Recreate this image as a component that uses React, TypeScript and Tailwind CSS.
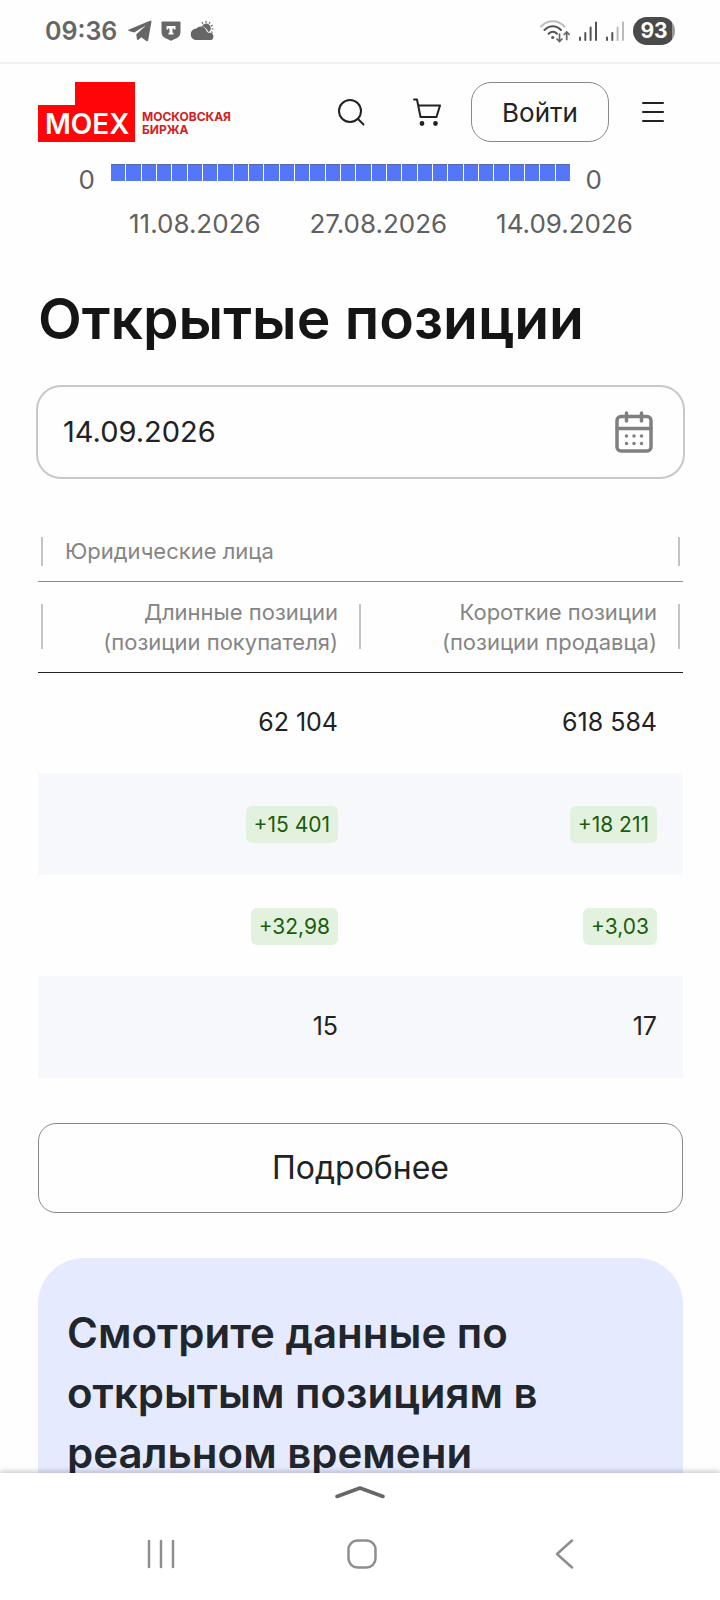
import { useState } from 'react';
import clsx from 'clsx';

interface PositionRow {
  label: string;
  long: string;
  short: string;
  badge?: boolean;
}

const ROWS: PositionRow[] = [
  { label: 'positions', long: '62 104', short: '618 584' },
  { label: 'change', long: '+15 401', short: '+18 211', badge: true },
  { label: 'percent', long: '+32,98', short: '+3,03', badge: true },
  { label: 'holders', long: '15', short: '17' },
];

const AXIS_DATES = ['11.08.2026', '27.08.2026', '14.09.2026'];
const BAR_COUNT = 30;

function StatusBar() {
  return (
    <div className="flex h-16 shrink-0 items-center justify-between border-b-2 border-[#f1f1f1] pr-[45px] pl-[45px] text-[#666]">
      <div className="flex items-center gap-[9px]">
        <span className="text-[25px] leading-8 font-semibold">09:36</span>
        <svg className="ml-[2px] h-[22px] w-6" viewBox="0 0 24 22" fill="currentColor" aria-hidden="true">
          <path d="M1 9.500 22 .8c1-.3 1.600.1 1.400 1.200L20.200 20c-.2 1.200-1 1.500-1.900 1l-5-3.700-2.900 2.500c-.6.500-1.300.2-1.400-.5L8.200 14.600 18 5.200 6.200 12.500 1 11c-1-.3-1-1.100 0-1.500z" />
        </svg>
        <svg className="h-5 w-5" viewBox="0 0 20 20" aria-hidden="true">
          <path d="M.5 1.500Q.5.500 1.500.5h17q1 0 1 1v9.500c0 3-1.500 4.800-3.500 6L10 19.800 4 17C2 15.800.5 14 .5 11z" fill="currentColor" />
          <path d="M5.500 5h9v3.600h-1.600V7.600h-1.400v4.200h1v1.600H7.500v-1.600h1V7.600H7.100v1H5.500z" fill="#fff" />
        </svg>
        <svg className="h-5 w-6" viewBox="0 0 24 20" fill="currentColor" aria-hidden="true">
          <path d="M6.500 19A5.700 5.700 0 0 1 6.300 7.600 6 6 0 0 1 16.500 10l1.500 1.800h1.800a3.600 3.600 0 0 1 0 7.200z" />
          <path d="M11.800 5.400a4.700 4.700 0 1 1 7.500 5.300h-1.200A8 8 0 0 0 11.800 5.400z" />
          <path d="M16 0v2M12 1l.8 1.800M20 1l-.8 1.800M22.700 4.200l-1.800.9M23.500 8h-2M22.700 11.500l-1.600-.8" stroke="currentColor" strokeWidth="1.200" />
        </svg>
      </div>

      <div className="flex items-center gap-[9px]">
        <svg className="h-6 w-[30px]" viewBox="0 0 30 24" fill="none" strokeWidth="2" strokeLinecap="round" aria-hidden="true">
          <path d="M1 7.500c6.500-7 17-7 23.500 0" stroke="#bbb" />
          <path d="M4.500 11c5-5 11.500-5 16.500 0M8.500 14.800c2.800-2.500 6-2.500 8.500 0" stroke="#555" />
          <circle cx="12.700" cy="18.500" r="1.600" fill="#555" />
          <path d="M19.500 15v7.500m-2.500-2.500 2.500 2.500 2.500-2.500M26.700 20.500V13m-2.500 2.500 2.500-2.500 2.500 2.500" stroke="#666" strokeWidth="1.700" />
        </svg>
        <svg className="h-5 w-[18px]" viewBox="0 0 18 20" stroke="#555" strokeWidth="2" strokeLinecap="round" aria-hidden="true">
          <path d="M1 16.500V19M6.300 12v7M11.600 6.500V19M17 1.500V19" />
        </svg>
        <svg className="h-5 w-[18px]" viewBox="0 0 18 20" strokeWidth="2" strokeLinecap="round" aria-hidden="true">
          <path d="M1 16.500V19M6.300 12v7" stroke="#555" />
          <path d="M11.600 6.500V19M17 1.500V19" stroke="#bbb" />
        </svg>
        <span className="h-7 w-[42px] overflow-hidden rounded-full bg-linear-to-r from-[#4a4a4a] from-93% to-[#999] to-93% text-center text-[21px] leading-7 font-bold text-white">
          93
        </span>
      </div>
    </div>
  );
}

function Logo() {
  return (
    <svg className="h-[60px] w-[200px]" viewBox="0 0 200 60" fontFamily="Inter, 'Liberation Sans', sans-serif">
      <path d="M37 0h60v60H0V23h37z" fill="#ff0508" />
      <text x="7" y="52" fontSize="28" fontWeight="600" fill="#fff">MOEX</text>
      <text x="104" y="39" fontSize="12" fontWeight="700" fill="#d32020">МОСКОВСКАЯ</text>
      <text x="104" y="52" fontSize="12" fontWeight="700" fill="#d32020">БИРЖА</text>
    </svg>
  );
}

function Header() {
  return (
    <header className="flex h-[100px] shrink-0 items-center justify-between pt-[18px] pr-[55px] pb-[22px] pl-[38px] text-[#222]">
      <a href="#" aria-label="Московская биржа">
        <Logo />
      </a>
      <div className="flex items-center">
        <button type="button" aria-label="Поиск" className="mr-12">
          <svg className="h-7 w-7" viewBox="0 0 28 28" fill="none" stroke="currentColor" strokeWidth="2" strokeLinecap="round">
            <circle cx="13" cy="13" r="11" />
            <path d="m21 21 5.500 5.500" />
          </svg>
        </button>
        <button type="button" aria-label="Корзина" className="mr-[30px]">
          <svg className="h-7 w-7" viewBox="0 0 28 28" fill="none" stroke="currentColor" strokeWidth="2" strokeLinejoin="round" strokeLinecap="round">
            <path d="M1 1.500h3L7.500 19H23.500L27 7.500H5.200" />
            <circle cx="9" cy="25.500" r="1.400" fill="currentColor" />
            <circle cx="22.500" cy="25.500" r="1.400" fill="currentColor" />
          </svg>
        </button>
        <button type="button" className="mr-8 h-[60px] w-[138px] rounded-[20px] border border-[#888] text-[26px]">
          Войти
        </button>
        <button type="button" aria-label="Меню">
          <svg className="h-6 w-6" viewBox="0 0 24 24" stroke="currentColor" strokeWidth="2" strokeLinecap="round">
            <path d="M2 3h20M2 12h20M2 21h20" />
          </svg>
        </button>
      </div>
    </header>
  );
}

function VolumeChart() {
  return (
    <section className="pr-[87px] pl-[43px] text-[26px] leading-8 text-[#606060]">
      <div className="flex pr-[31px]">
        <span className="w-[68px] pr-4 text-right">0</span>
        <div className="flex h-[17px] flex-1 gap-px">
          {Array.from({ length: BAR_COUNT }, (_, i) => (
            <div key={i} className="flex-1 border-t border-[#5468b0] bg-[#5676f8]" />
          ))}
        </div>
        <span className="w-8 text-right">0</span>
      </div>
      <div className="mt-3 flex justify-between pl-[86px]">
        {AXIS_DATES.map(date => (
          <span key={date}>{date}</span>
        ))}
      </div>
    </section>
  );
}

function DateField() {
  const [date, setDate] = useState('14.09.2026');

  return (
    <div className="-mx-[2px] mt-7 flex h-[94px] items-center rounded-[25px] border-2 border-[#c8c8c8] pr-[30px] pl-[25px]">
      <input
        type="text"
        aria-label="Дата"
        value={date}
        onChange={e => setDate(e.target.value)}
        className="min-w-0 flex-1 text-[29px] text-[#222] outline-none"
      />
      <button type="button" aria-label="Открыть календарь" className="text-[#808080]">
        <svg className="h-[42px] w-[38px]" viewBox="0 0 38 42" fill="none" stroke="currentColor" strokeWidth="3.500" strokeLinecap="round">
          <rect x="2" y="5.500" width="34" height="34.500" rx="4" />
          <path d="M2 17.500h34M11.500 2v8M26.500 2v8" />
          <path d="M11.500 25h.01M19 25h.01M26.500 25h.01M11.500 32.500h.01M19 32.500h.01M26.500 32.500h.01" />
        </svg>
      </button>
    </div>
  );
}

function Divider({ tall }: { tall?: boolean }) {
  return <span className={clsx('w-[2px] shrink-0 bg-[#c4c4c4]', tall ? 'h-[45px]' : 'h-[29px]')} />;
}

function PositionsTable() {
  return (
    <table className="mt-[43px] w-full table-fixed border-collapse text-[#222]">
      <colgroup>
        <col className="w-[326px]" />
        <col />
      </colgroup>
      <thead className="text-[22px] leading-[30px] text-[#858585]">
        <tr className="border-b border-[#8c8c8c]">
          <th colSpan={2} scope="colgroup" className="h-[59px] p-0 px-[3px] text-left font-normal">
            <div className="flex items-center justify-between">
              <Divider />
              <span className="flex-1 pl-[22px]">Юридические лица</span>
              <Divider />
            </div>
          </th>
        </tr>
        <tr className="border-b border-[#222]">
          <th scope="col" className="h-[91px] p-0 px-[3px] text-right font-normal">
            <div className="flex items-center">
              <Divider tall />
              <span className="flex-1 pr-[21px]">
                Длинные позиции
                <br />
                (позиции покупателя)
              </span>
              <Divider tall />
            </div>
          </th>
          <th scope="col" className="h-[91px] p-0 px-[3px] text-right font-normal">
            <div className="flex items-center">
              <span className="flex-1 pr-[21px]">
                Короткие позиции
                <br />
                (позиции продавца)
              </span>
              <Divider tall />
            </div>
          </th>
        </tr>
      </thead>
      <tbody>
        {ROWS.map(row => (
          <tr key={row.label} className="odd:h-[101px] even:h-[102px] even:bg-[#f6f8fc]">
            {[row.long, row.short].map((value, i) => (
              <td key={i} className="p-0 pr-[26px] text-right text-[25px]">
                {row.badge ? (
                  <span className="inline-block rounded-md bg-[#e3f2df] px-2 py-1 align-middle text-[21px] leading-[29px] text-[#1c5c0c]">
                    {value}
                  </span>
                ) : (
                  value
                )}
              </td>
            ))}
          </tr>
        ))}
      </tbody>
    </table>
  );
}

function NavBar() {
  return (
    <nav className="z-10 flex h-[127px] shrink-0 flex-col items-center bg-white pt-3 text-[#8e8e8e] shadow-[0_-2px_5px_rgba(0,0,0,0.2)]">
      <button type="button" aria-label="Развернуть" className="text-[#666]">
        <svg className="h-[14px] w-[50px]" viewBox="0 0 50 14" fill="none" stroke="currentColor" strokeWidth="3.500" strokeLinecap="round" strokeLinejoin="round">
          <path d="M2 11.500 25 3l23 8.500" />
        </svg>
      </button>
      <div className="mt-10 grid w-full grid-cols-3 justify-items-center pr-[55px] pl-[60px]">
        <button type="button" aria-label="Недавние">
          <svg className="h-[30px] w-[30px]" viewBox="0 0 30 30" stroke="currentColor" strokeWidth="2.500" strokeLinecap="round">
            <path d="M3 2v26M15 2v26M27 2v26" />
          </svg>
        </button>
        <button type="button" aria-label="Домой">
          <svg className="h-[30px] w-[30px]" viewBox="0 0 30 30" fill="none" stroke="currentColor" strokeWidth="2.500">
            <rect x="1.500" y="1.500" width="27" height="27" rx="9" />
          </svg>
        </button>
        <button type="button" aria-label="Назад">
          <svg className="h-[30px] w-[30px]" viewBox="0 0 30 30" fill="none" stroke="currentColor" strokeWidth="2.500" strokeLinecap="round" strokeLinejoin="round">
            <path d="M23 1.500 8 15l15 13.500" />
          </svg>
        </button>
      </div>
    </nav>
  );
}

export default function App() {
  return (
    <div className="flex h-screen flex-col bg-[#fefefe] font-[Inter,'Liberation_Sans',sans-serif]">
      <StatusBar />
      <Header />
      <main className="min-h-0 flex-1 overflow-y-auto [scrollbar-width:none]">
        <VolumeChart />
        <div className="pr-[37px] pl-[38px]">
          <h1 className="mt-[41px] text-[57px] leading-[76px] font-semibold text-[#151515]">
            Открытые позиции
          </h1>
          <DateField />
          <PositionsTable />
          <button type="button" className="mt-[45px] h-[90px] w-full rounded-[18px] border border-[#888] text-[32px] text-[#222]">
            Подробнее
          </button>
          <section className="mt-[45px] rounded-[46px] bg-[#e6eafe] px-[29px] pt-[45px] pb-12">
            <h2 className="text-[42px] leading-[60px] font-semibold text-[#20262c]">
              Смотрите данные по открытым позициям в реальном времени
            </h2>
          </section>
        </div>
      </main>
      <NavBar />
    </div>
  );
}
